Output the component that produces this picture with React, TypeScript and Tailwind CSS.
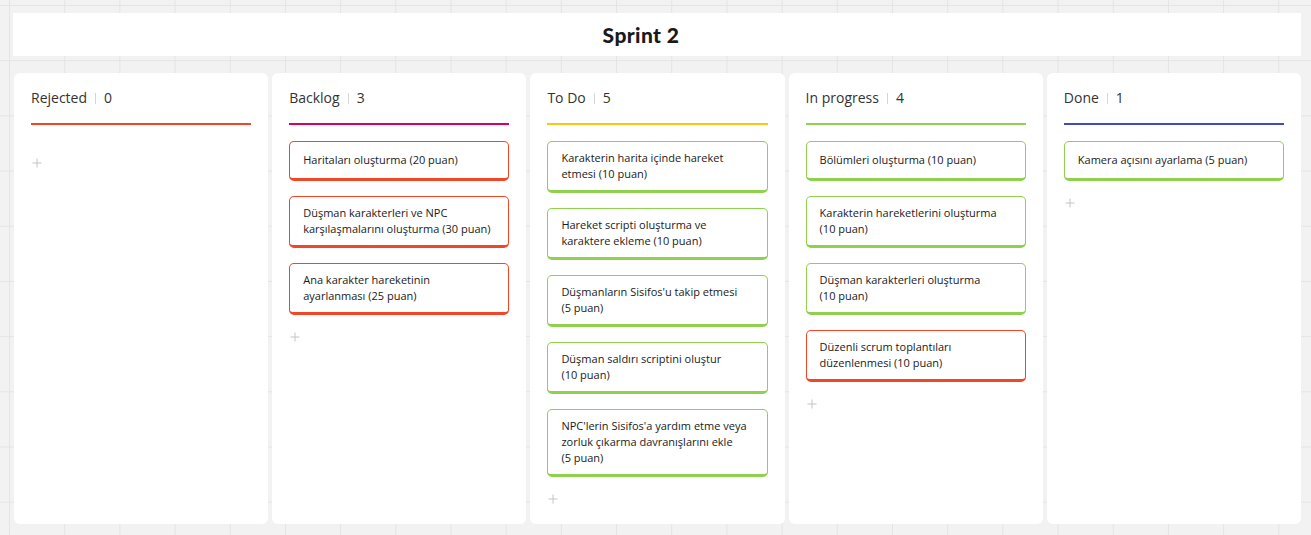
import React from 'react';

type Tone = 'red' | 'green';

interface Card {
  text: string[];
  tone: Tone;
}

interface Column {
  title: string;
  line: string;
  cards: Card[];
}

const columns: Column[] = [
  { title: 'Rejected', line: 'bg-[#f24726]', cards: [] },
  {
    title: 'Backlog',
    line: 'bg-[#da0063]',
    cards: [
      { text: ['Haritaları oluşturma (20 puan)'], tone: 'red' },
      { text: ['Düşman karakterleri ve NPC', 'karşılaşmalarını oluşturma (30 puan)'], tone: 'red' },
      { text: ['Ana karakter hareketinin', 'ayarlanması (25 puan)'], tone: 'red' },
    ],
  },
  {
    title: 'To Do',
    line: 'bg-[#fac710]',
    cards: [
      { text: ['Karakterin harita içinde hareket', 'etmesi (10 puan)'], tone: 'green' },
      { text: ['Hareket scripti oluşturma ve', 'karaktere ekleme (10 puan)'], tone: 'green' },
      { text: ["Düşmanların Sisifos'u takip etmesi", '(5 puan)'], tone: 'green' },
      { text: ['Düşman saldırı scriptini oluştur', '(10 puan)'], tone: 'green' },
      {
        text: ["NPC'lerin Sisifos'a yardım etme veya", 'zorluk çıkarma davranışlarını ekle', '(5 puan)'],
        tone: 'green',
      },
    ],
  },
  {
    title: 'In progress',
    line: 'bg-[#8fd14f]',
    cards: [
      { text: ['Bölümleri oluşturma (10 puan)'], tone: 'green' },
      { text: ['Karakterin hareketlerini oluşturma', '(10 puan)'], tone: 'green' },
      { text: ['Düşman karakterleri oluşturma', '(10 puan)'], tone: 'green' },
      { text: ['Düzenli scrum toplantıları', 'düzenlenmesi (10 puan)'], tone: 'red' },
    ],
  },
  {
    title: 'Done',
    line: 'bg-[#414bb2]',
    cards: [{ text: ['Kamera açısını ayarlama (5 puan)'], tone: 'green' }],
  },
];

const toneClass: Record<Tone, string> = {
  red: 'border-[#f24726]',
  green: 'border-[#8fd14f]',
};

function Plus() {
  return (
    <svg width="10" height="10" viewBox="0 0 10 10" className="block">
      <path d="M5 0.5v9M0.5 5h9" stroke="#c4c4c4" strokeWidth="1" />
    </svg>
  );
}

function TaskCard({ card }: { card: Card }) {
  return (
    <div
      className={`flex min-h-[40px] items-center rounded-[5px] border border-b-[3px] bg-white px-[13px] py-[8px] text-[11px] leading-[16px] text-[#1a1a1a] ${toneClass[card.tone]}`}
    >
      <div>
        {card.text.map((t, i) => (
          <div key={i} className="whitespace-nowrap">
            {t}
          </div>
        ))}
      </div>
    </div>
  );
}

function BoardColumn({ col }: { col: Column }) {
  const empty = col.cards.length === 0;
  return (
    <div className="flex flex-col rounded-[6px] bg-white px-[17px]">
      <div className="flex h-[50px] items-end pb-[16px] text-[14px] leading-[18px] text-[#333333]">
        <span>{col.title}</span>
        <span className="mx-[8px] mb-[3px] h-[11px] w-px bg-[#d6d6d6]" />
        <span>{col.cards.length}</span>
      </div>
      <div className={`h-[1.5px] w-full ${col.line}`} />
      {!empty && (
        <div className="mt-[16px] flex flex-col gap-[15px]">
          {col.cards.map((c, i) => (
            <TaskCard key={i} card={c} />
          ))}
        </div>
      )}
      <div className={`pl-[1px] ${empty ? 'mt-[33px]' : 'mt-[17px]'}`}>
        <Plus />
      </div>
    </div>
  );
}

export default function App() {
  return (
    <div
      className="h-[535px] w-[1311px] overflow-hidden bg-[#f2f2f2] bg-[linear-gradient(to_right,#e4e4e4_1px,transparent_1px),linear-gradient(to_bottom,#e4e4e4_1px,transparent_1px)] bg-[size:55.2px_55.2px] bg-[position:9px_5px] pl-[13px] pt-[13px] pr-[10px]"
      style={{ fontFamily: '"Open Sans", "Noto Sans", sans-serif' }}
    >
      <div className="flex h-[43px] items-center justify-center bg-white pr-[32px]">
        <span
          className="text-[21px] font-black tracking-[0.4px] text-[#1a1a1a]"
          style={{ fontFamily: 'Lato, "Noto Sans", sans-serif' }}
        >
          Sprint 2
        </span>
      </div>
      <div className="ml-[1px] mt-[17px] grid h-[451px] grid-cols-5 gap-[4px]">
        {columns.map((c) => (
          <BoardColumn key={c.title} col={c} />
        ))}
      </div>
    </div>
  );
}
